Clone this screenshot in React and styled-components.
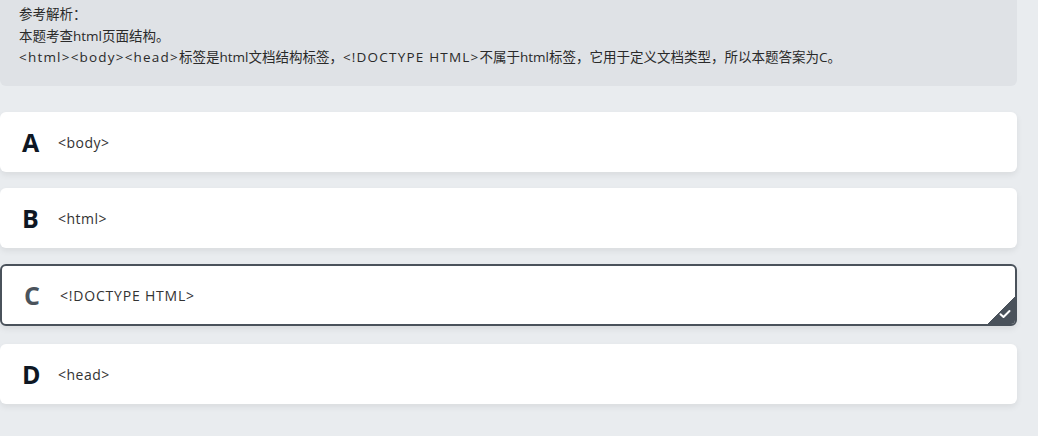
import styled, { createGlobalStyle } from 'styled-components';

const GlobalStyle = createGlobalStyle`
  body {
    margin: 0;
    background: #e9ecef;
    font-family: 'Open Sans', 'Noto Sans CJK SC', sans-serif;
  }
`;

const StyledPage = styled.div`
  width: 1038px;
  height: 436px;
  padding-right: 21px;
  box-sizing: border-box;
  overflow: hidden;
`;

const StyledAnalysis = styled.div`
  background: #dfe2e6;
  border-radius: 0 0 6px 6px;
  padding: 4px 19px 17.5px;
  font-size: 13.5px;
  line-height: 21.5px;
  color: #2a2a2a;
  margin-bottom: 26px;
`;

// 英文标签部分字距较宽
const StyledTag = styled.span`
  letter-spacing: 1.2px;
`;

const StyledOption = styled.div`
  position: relative;
  display: flex;
  align-items: center;
  height: ${(p) => (p.$selected ? '62px' : '60px')};
  box-sizing: border-box;
  background: #fff;
  border-radius: 6px;
  border: ${(p) => (p.$selected ? '2px solid #4a525b' : 'none')};
  padding-left: 22px;
  margin-bottom: ${(p) => (p.$selected ? '18px' : '16px')};
  box-shadow: 0 3px 6px rgba(0, 0, 0, 0.07);
  overflow: hidden;
`;

const StyledLetter = styled.span`
  width: 36px;
  font-size: 25px;
  font-weight: 700;
  color: ${(p) => (p.$selected ? '#4b535c' : '#0e1724')};
`;

const StyledText = styled.span`
  font-size: 14px;
  letter-spacing: ${(p) => (p.$selected ? '0.8px' : '0.5px')};
  color: #333;
`;

const StyledCorner = styled.div`
  position: absolute;
  right: 0;
  bottom: 0;
  width: 28px;
  height: 28px;
  background: linear-gradient(135deg, transparent 50%, #4a525b 50%);

  svg {
    position: absolute;
    right: 4px;
    bottom: 5px;
  }
`;

const options = [
  { key: 'A', text: '<body>' },
  { key: 'B', text: '<html>' },
  { key: 'C', text: '<!DOCTYPE HTML>', selected: true },
  { key: 'D', text: '<head>' },
];

const App = () => {
  return (
    <StyledPage>
      <GlobalStyle />
      <StyledAnalysis>
        <div>参考解析：</div>
        <div>本题考查html页面结构。</div>
        <div>
          <StyledTag>&lt;html&gt;&lt;body&gt;&lt;head&gt;</StyledTag>
          标签是html文档结构标签，
          <StyledTag>&lt;!DOCTYPE HTML&gt;</StyledTag>
          不属于html标签，它用于定义文档类型，所以本题答案为C。
        </div>
      </StyledAnalysis>
      {options.map((o) => (
        <StyledOption key={o.key} $selected={o.selected}>
          <StyledLetter $selected={o.selected}>{o.key}</StyledLetter>
          <StyledText $selected={o.selected}>{o.text}</StyledText>
          {o.selected && (
            <StyledCorner>
              <svg width="12" height="10" viewBox="0 0 12 10">
                <path
                  d="M1.5 5.2 L4.5 8 L10.5 2"
                  fill="none"
                  stroke="#fff"
                  strokeWidth="2"
                  strokeLinecap="round"
                  strokeLinejoin="round"
                />
              </svg>
            </StyledCorner>
          )}
        </StyledOption>
      ))}
    </StyledPage>
  );
};

export default App;
